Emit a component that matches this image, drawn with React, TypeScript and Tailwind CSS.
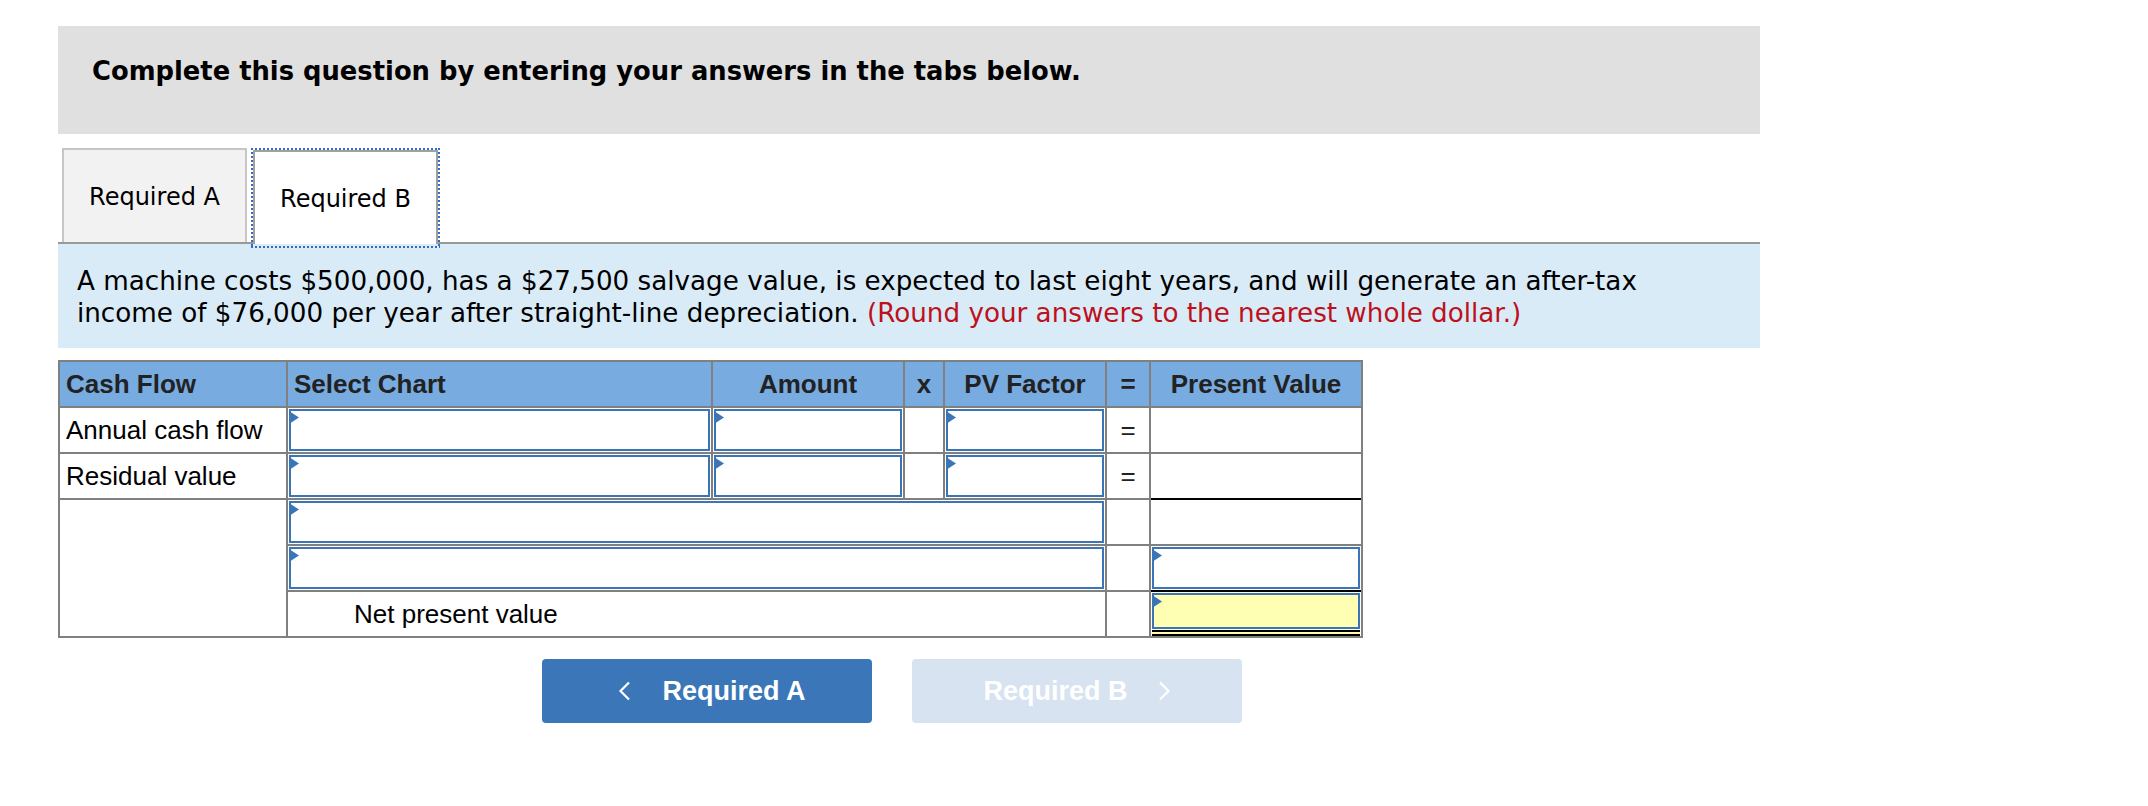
import React from "react";

const Tri = () => (
  <svg
    className="absolute left-[-2px] top-0"
    width="10"
    height="13"
    viewBox="0 0 10 13"
  >
    <path d="M0 0 L10 6.5 L0 13 Z" fill="#3a75b8" />
  </svg>
);

function Field({ yellow = false }: { yellow?: boolean }) {
  return (
    <div
      className={
        yellow
          ? "relative h-full w-full border-2 border-[#3a75b8] bg-[#ffffb3]"
          : "relative h-full w-full border-2 border-[#3a75b8] bg-white"
      }
    >
      <Tri />
    </div>
  );
}

const Chevron = ({ dir }: { dir: "left" | "right" }) => (
  <svg width="13" height="20" viewBox="0 0 13 20" fill="none">
    {dir === "left" ? (
      <polyline points="11,1.5 2.5,10 11,18.5" stroke="#ffffff" strokeWidth="2.2" fill="none" />
    ) : (
      <polyline points="2,1.5 10.5,10 2,18.5" stroke="#ffffff" strokeWidth="2.2" fill="none" />
    )}
  </svg>
);

export default function App() {
  return (
    <div className="min-h-[806px] w-full bg-white">
      <div className="ml-[58px] w-[1702px] pt-[26px]">
        {/* Header */}
        <div className="h-[108px] bg-[#e0e0e0] pl-[34px] pt-[29px] font-['DejaVu_Sans',Verdana,sans-serif] text-[25.8px] font-bold leading-[32px] text-black">
          Complete this question by entering your answers in the tabs below.
        </div>

        {/* Tabs */}
        <div className="mt-[14px] flex h-[96px] items-end border-b-2 border-[#999999] font-['DejaVu_Sans',Verdana,sans-serif] text-[24px] text-black">
          <div className="ml-[4px] flex h-[94px] w-[185px] items-center justify-center border-2 border-b-0 border-[#c6c6c6] bg-[#f2f2f2] pt-[2px]">
            Required A
          </div>
          <div className="relative -mb-[2px] ml-[6px] flex h-[94px] w-[185px] items-center justify-center border-2 border-b-0 border-[#a0a0a0] bg-white pt-[2px]">
            Required B
            <span className="pointer-events-none absolute -inset-[4px] bg-[linear-gradient(90deg,#2f6fbf_50%,transparent_50%),linear-gradient(90deg,#2f6fbf_50%,transparent_50%),linear-gradient(180deg,#2f6fbf_50%,transparent_50%),linear-gradient(180deg,#2f6fbf_50%,transparent_50%)] [background-size:4px_2px,4px_2px,2px_4px,2px_4px] [background-position:0_0,0_100%,0_0,100%_0] [background-repeat:repeat-x,repeat-x,repeat-y,repeat-y]" />
          </div>
        </div>

        {/* Info */}
        <div className="bg-[#daebf8] pb-[19px] pl-[19px] pt-[21px] font-['DejaVu_Sans',Verdana,sans-serif] text-[26.2px] leading-[32px] text-black">
          <p className="whitespace-nowrap">
            A machine costs $500,000, has a $27,500 salvage value, is expected to last eight years, and will generate an after-tax
            <br />
            income of $76,000 per year after straight-line depreciation.{" "}
            <span className="text-[#bd111b]">(Round your answers to the nearest whole dollar.)</span>
          </p>
        </div>

        {/* Table */}
        <div className="mt-[12px] grid w-[1305px] grid-cols-[226px_423px_190px_38px_160px_42px_210px] grid-rows-[44px_44px_44px_44px_44px_44px] gap-[2px] bg-[#808080] p-[2px] font-['Liberation_Sans',Arial,sans-serif] text-[26px] text-black">
          {/* header */}
          <div className="flex items-center bg-[#78abe0] pl-[6px] font-bold text-[#222222]">Cash Flow</div>
          <div className="flex items-center bg-[#78abe0] pl-[6px] font-bold text-[#222222]">Select Chart</div>
          <div className="flex items-center justify-center bg-[#78abe0] font-bold text-[#222222]">Amount</div>
          <div className="flex items-center justify-center bg-[#78abe0] font-bold text-[#222222]">x</div>
          <div className="flex items-center justify-center bg-[#78abe0] font-bold text-[#222222]">PV Factor</div>
          <div className="flex items-center justify-center bg-[#78abe0] font-bold text-[#222222]">=</div>
          <div className="flex items-center justify-center bg-[#78abe0] font-bold text-[#222222]">Present Value</div>

          {/* row 1 */}
          <div className="flex items-center bg-white pl-[6px]">Annual cash flow</div>
          <div className="bg-white p-px"><Field /></div>
          <div className="bg-white p-px"><Field /></div>
          <div className="bg-white" />
          <div className="bg-white p-px"><Field /></div>
          <div className="flex items-center justify-center bg-white text-[#222222]">=</div>
          <div className="bg-white" />

          {/* row 2 */}
          <div className="flex items-center bg-white pl-[6px]">Residual value</div>
          <div className="bg-white p-px"><Field /></div>
          <div className="bg-white p-px"><Field /></div>
          <div className="bg-white" />
          <div className="bg-white p-px"><Field /></div>
          <div className="flex items-center justify-center bg-white text-[#222222]">=</div>
          <div className="bg-white shadow-[0_2px_0_#000000]" />

          {/* row 3 */}
          <div className="row-span-3 bg-white" />
          <div className="col-span-4 bg-white p-px"><Field /></div>
          <div className="bg-white" />
          <div className="bg-white" />

          {/* row 4 */}
          <div className="col-span-4 bg-white p-px"><Field /></div>
          <div className="bg-white" />
          <div className="bg-white p-px shadow-[0_2px_0_#000000]"><Field /></div>

          {/* row 5 */}
          <div className="col-span-4 flex items-center bg-white pl-[66px]">Net present value</div>
          <div className="bg-white" />
          <div className="flex flex-col bg-white px-px pt-px">
            <div className="flex-1">
              <Field yellow />
            </div>
            <div className="mt-px h-[2px] bg-black" />
            <div className="h-[2px] bg-[#ffffb3]" />
            <div className="h-[2px] bg-black" />
          </div>
        </div>

        {/* Buttons */}
        <div className="ml-[484px] mt-[21px] flex gap-[40px] font-['Liberation_Sans',Arial,sans-serif] text-[27px] font-bold text-white">
          <button className="flex h-[64px] w-[330px] items-center justify-center gap-[31px] rounded-[4px] bg-[#3a76b8] pl-[10px] text-white">
            <Chevron dir="left" />
            <span>Required A</span>
          </button>
          <button className="flex h-[64px] w-[330px] items-center justify-center gap-[30px] rounded-[4px] bg-[#d7e3f1] text-white">
            <span>Required B</span>
            <Chevron dir="right" />
          </button>
        </div>
      </div>
    </div>
  );
}
